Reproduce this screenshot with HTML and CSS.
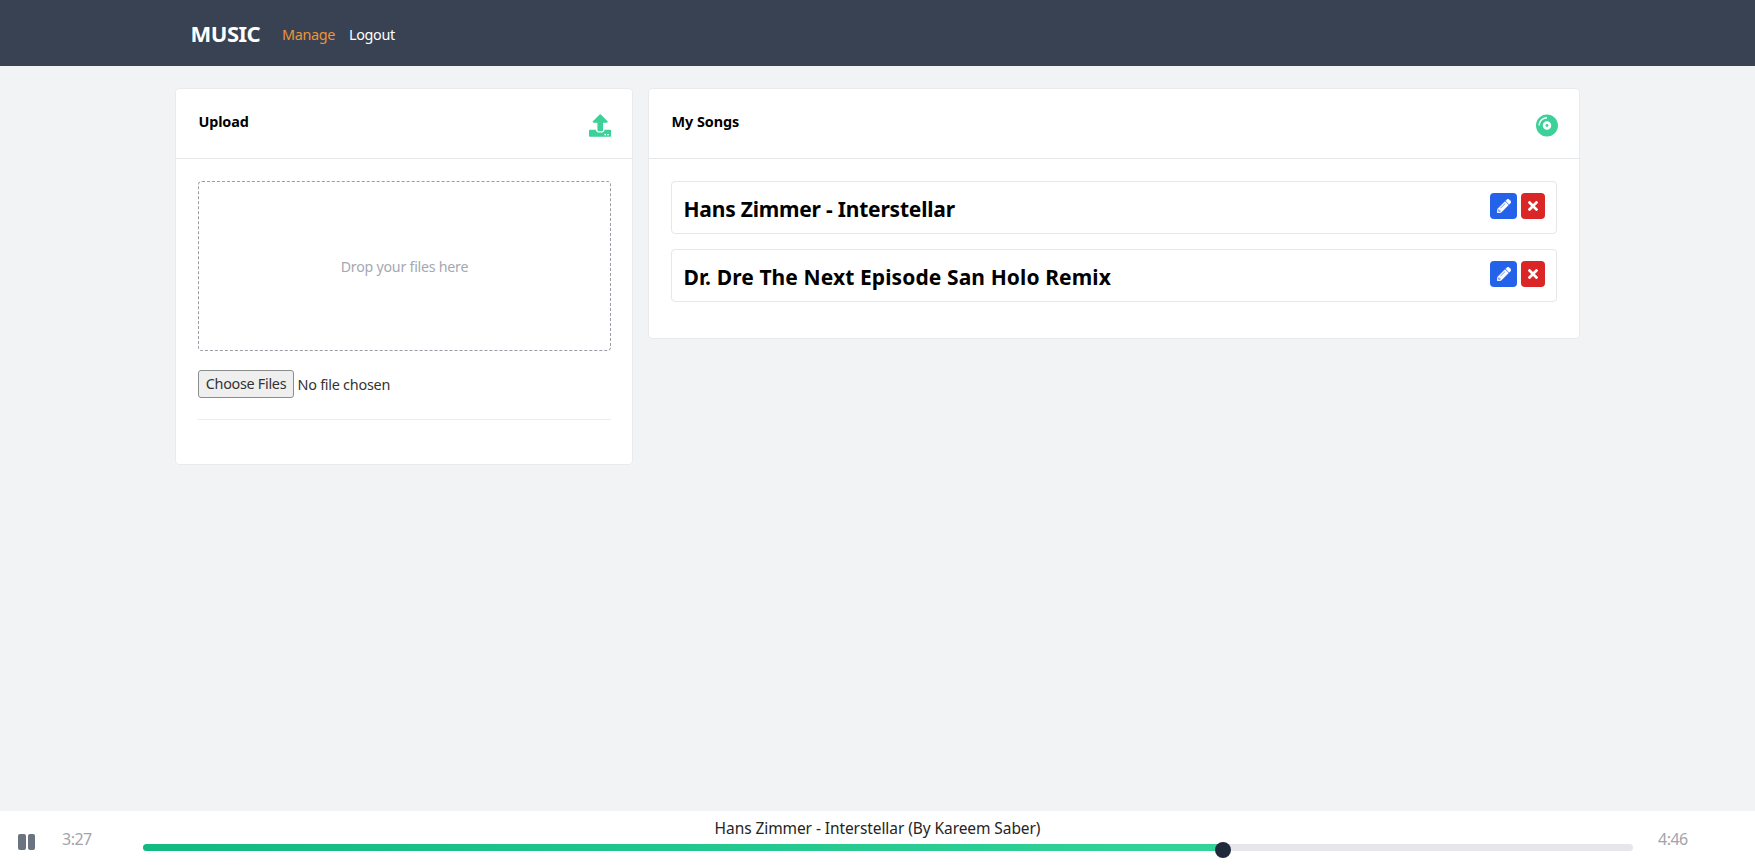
FILE: index.html
```html
<!DOCTYPE html>
<html lang="en">
<head>
<meta charset="utf-8">
<title>Music</title>
<link rel="stylesheet" href="styles.css">
</head>
<body>
<header class="navbar">
  <nav class="nav">
    <a class="brand">MUSIC</a>
    <a class="link active">Manage</a>
    <a class="link logout">Logout</a>
  </nav>
</header>
<main class="content">
  <section class="card">
    <div class="card-head">
      <span class="card-title upload-title">Upload</span>
      <svg class="head-icon upload-icon" viewBox="0 0 512 512"><path d="M296 384h-80c-13.300 0-24-10.700-24-24V192h-87.700c-17.800 0-26.700-21.500-14.100-34.100L242.300 5.700c7.500-7.500 19.800-7.500 27.300 0l152.200 152.200c12.600 12.600 3.700 34.100-14.100 34.100H320v168c0 13.300-10.700 24-24 24zm216-8v112c0 13.300-10.700 24-24 24H24c-13.300 0-24-10.700-24-24V376c0-13.300 10.700-24 24-24h136v8c0 30.900 25.100 56 56 56h80c30.900 0 56-25.100 56-56v-8h136c13.300 0 24 10.700 24 24zm-124 88c0-11-9-20-20-20s-20 9-20 20 9 20 20 20 20-9 20-20zm64 0c0-11-9-20-20-20s-20 9-20 20 9 20 20 20 20-9 20-20z"/></svg>
    </div>
    <div class="card-body">
      <div class="dropzone"><span class="drop-text">Drop your files here</span></div>
      <div class="file-row">
        <button class="file-button">Choose Files</button>
        <span class="file-status">No file chosen</span>
      </div>
      <hr class="divider">
    </div>
  </section>
  <section class="card">
    <div class="card-head">
      <span class="card-title songs-title">My Songs</span>
      <svg class="head-icon disc-icon" viewBox="0 0 496 512"><path d="M248 8C111 8 0 119 0 256s111 248 248 248 248-111 248-248S385 8 248 8zM88 256H56c0-105.900 86.100-192 192-192v32c-88.200 0-160 71.800-160 160zm160 96c-53 0-96-43-96-96s43-96 96-96 96 43 96 96-43 96-96 96zm0-128c-17.700 0-32 14.300-32 32s14.300 32 32 32 32-14.300 32-32-14.300-32-32-32z"/></svg>
    </div>
    <div class="card-body songs">
      <div class="song">
        <span class="song-name">Hans Zimmer - Interstellar</span>
        <div class="actions">
          <button class="btn edit"><svg class="pen" viewBox="0 0 512 512"><path d="M497.900 142.100l-46.100 46.100c-4.700 4.700-12.300 4.700-17 0l-111-111c-4.700-4.700-4.700-12.300 0-17l46.100-46.100c18.700-18.700 49.100-18.700 67.900 0l60.100 60.100c18.800 18.700 18.800 49.100 0 67.900zM284.200 99.800L21.600 362.400.4 483.900c-2.900 16.400 11.400 30.600 27.800 27.800l121.500-21.300 262.600-262.600c4.700-4.700 4.700-12.300 0-17l-111-111c-4.800-4.700-12.400-4.700-17.100 0zM124.100 339.900c-5.500-5.500-5.500-14.300 0-19.800l154-154c5.500-5.500 14.300-5.500 19.800 0s5.500 14.300 0 19.800l-154 154c-5.500 5.500-14.300 5.500-19.800 0zM88 424h48v36.300l-64.500 11.300-31.100-31.100L51.700 376H88v48z"/></svg></button>
          <button class="btn remove"><svg class="cross" viewBox="0 0 352 352"><path d="M242.700 176L342.800 75.900c12.300-12.300 12.300-32.200 0-44.500L320.600 9.200c-12.300-12.300-32.200-12.300-44.500 0L176 109.300 75.900 9.200C63.600-3.100 43.700-3.100 31.400 9.200L9.200 31.400c-12.300 12.300-12.300 32.200 0 44.500L109.300 176 9.200 276.100c-12.300 12.300-12.300 32.200 0 44.500l22.200 22.200c12.300 12.300 32.200 12.300 44.500 0L176 242.700l100.100 100.100c12.300 12.300 32.200 12.300 44.500 0l22.200-22.200c12.300-12.300 12.300-32.200 0-44.500z"/></svg></button>
        </div>
      </div>
      <div class="song second">
        <span class="song-name long">Dr. Dre The Next Episode San Holo Remix</span>
        <div class="actions">
          <button class="btn edit"><svg class="pen" viewBox="0 0 512 512"><path d="M497.900 142.100l-46.100 46.100c-4.700 4.700-12.300 4.700-17 0l-111-111c-4.700-4.700-4.700-12.300 0-17l46.100-46.100c18.700-18.700 49.100-18.700 67.900 0l60.100 60.100c18.800 18.700 18.800 49.100 0 67.900zM284.200 99.800L21.600 362.400.4 483.900c-2.900 16.400 11.400 30.600 27.800 27.800l121.500-21.300 262.600-262.600c4.700-4.700 4.700-12.300 0-17l-111-111c-4.800-4.700-12.400-4.700-17.100 0zM124.100 339.900c-5.500-5.500-5.500-14.300 0-19.800l154-154c5.500-5.500 14.300-5.500 19.800 0s5.500 14.300 0 19.800l-154 154c-5.500 5.500-14.300 5.500-19.800 0zM88 424h48v36.300l-64.500 11.300-31.100-31.100L51.700 376H88v48z"/></svg></button>
          <button class="btn remove"><svg class="cross" viewBox="0 0 352 352"><path d="M242.700 176L342.800 75.900c12.300-12.300 12.300-32.200 0-44.500L320.600 9.200c-12.300-12.300-32.200-12.300-44.500 0L176 109.300 75.900 9.200C63.600-3.100 43.700-3.100 31.400 9.200L9.200 31.400c-12.300 12.300-12.300 32.200 0 44.500L109.300 176 9.200 276.100c-12.300 12.300-12.300 32.200 0 44.500l22.200 22.200c12.300 12.300 32.200 12.300 44.500 0L176 242.700l100.100 100.100c12.300 12.300 32.200 12.300 44.500 0l22.200-22.200c12.300-12.300 12.300-32.200 0-44.500z"/></svg></button>
        </div>
      </div>
    </div>
  </section>
</main>
<footer class="player">
  <div class="pause"><span class="bar"></span><span class="bar"></span></div>
  <span class="time elapsed">3:27</span>
  <div class="timeline">
    <span class="now-playing">Hans Zimmer - Interstellar (By Kareem Saber)</span>
    <div class="track">
      <div class="progress" style="width: 72.500%"><span class="thumb"></span></div>
    </div>
  </div>
  <span class="time total">4:46</span>
</footer>
</body>
</html>
```
FILE: styles.css
```css
* { box-sizing: border-box; }
body {
  margin: 0;
  height: 868px;
  display: flex;
  flex-direction: column;
  overflow: hidden;
  background: #f2f3f5;
  color: #000;
  font-family: "Noto Sans", "Open Sans", sans-serif;
  font-size: 14px;
}
span, a { white-space: nowrap; }
.navbar { height: 66px; padding-left: 190.500px; background: #394252; flex: none; }
.nav { display: flex; height: 66px; align-items: flex-start; }
.brand { color: #fff; font-size: 22px; font-weight: 700; width: 91.500px; letter-spacing: -0.5px; line-height: 67px; }
.link { color: #fff; font-size: 14.400px; width: 67px; letter-spacing: -0.35px; line-height: 69px; }
.link.active { color: #ed9536; }
.content {
  display: grid;
  grid-template-columns: 458px 932px;
  column-gap: 15px;
  align-items: start;
  padding: 22px 0 0 175px;
  flex: 1;
}
.card { background: #fff; border: 1px solid #e8eaed; border-radius: 4px; }
.card-head {
  display: flex;
  justify-content: space-between;
  height: 70px;
  padding: 22px 21px 0 22px;
  border-bottom: 1px solid #e5e7eb;
}
.card-title { font-size: 14.400px; font-weight: 700; line-height: 22px; letter-spacing: -0.15px; padding-left: 0.500px; }
.songs-title { letter-spacing: -0.05px; }
.head-icon { fill: #3bd199; margin-top: 3px; }
.upload-icon { width: 22.500px; height: 23px; }
.disc-icon { width: 22px; height: 23px; margin-right: 0.500px; }
.card-body { padding: 22px 21px 44px 22px; }
.dropzone {
  height: 170px;
  display: flex;
  align-items: center;
  justify-content: center;
  border: 1px dashed #9a9da3;
  border-radius: 4px;
  color: #a5a8b2;
}
.drop-text { font-size: 14.200px; letter-spacing: -0.23px; }
.file-row { display: flex; align-items: center; gap: 3.500px; height: 28px; margin-top: 19px; color: #333; }
.file-button {
  width: 96px;
  height: 28px;
  padding: 0;
  border: 1px solid #8b8e8e;
  border-radius: 3px;
  background: #efefef;
  color: #333;
  font: 14.400px/26px "Noto Sans", "Open Sans", sans-serif;
  letter-spacing: -0.3px;
  white-space: nowrap;
}
.file-status { font-size: 14.400px; letter-spacing: -0.25px; }
.divider { margin: 21px 0 0; border: 0; border-top: 1px solid #ebecef; }
.card-body.songs { padding-right: 22px; padding-bottom: 36px; }
.song {
  display: flex;
  justify-content: space-between;
  height: 53px;
  padding: 11px;
  border: 1px solid #e5e7eb;
  border-radius: 4px;
}
.song.second { margin-top: 15px; }
.song-name { font-size: 21px; font-weight: 700; line-height: 32px; letter-spacing: -0.21px; padding-left: 0.500px; }
.song-name.long { letter-spacing: 0.1px; }
.actions { display: flex; gap: 4px; }
.btn { display: flex; align-items: center; justify-content: center; height: 26px; padding: 0; border: 0; border-radius: 4px; }
.edit { width: 27px; background: #2562ea; }
.remove { width: 24px; background: #da2626; }
.btn svg { fill: #fff; }
.pen { width: 14px; height: 14px; stroke: #fff; stroke-width: 14px; }
.cross { width: 10px; height: 10px; }
.player { display: flex; height: 58px; margin-bottom: -1px; padding-left: 18px; background: #fff; flex: none; }
.pause { display: flex; gap: 2px; width: 44px; padding-top: 23px; }
.bar { width: 7.500px; height: 16px; border-radius: 2px; background: #6b7280; }
.time { color: #a1a4ad; font-size: 16px; line-height: 56px; letter-spacing: -0.5px; }
.elapsed { width: 80.500px; }
.timeline { width: 1490px; padding-top: 5px; display: flex; flex-direction: column; align-items: center; }
.now-playing { height: 28px; margin-right: 20px; line-height: 24px; font-size: 15.500px; letter-spacing: -0.08px; color: #252525; }
.track { width: 100%; height: 7px; border-radius: 4px; background: #e5e7eb; }
.progress { position: relative; height: 7px; border-radius: 4px; background: linear-gradient(90deg, #12b981, #34d399); }
.thumb { position: absolute; right: -8px; top: -2px; width: 16px; height: 16px; border-radius: 50%; background: #1f2a3c; }
.total { margin-left: 25.500px; }
```
